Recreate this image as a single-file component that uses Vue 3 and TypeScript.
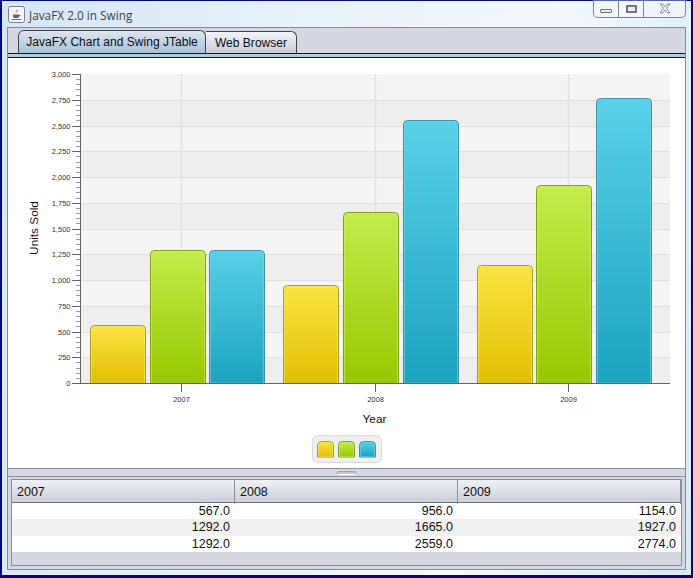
<script setup lang="ts">
const plotTop = 74
const plotBottom = 383
const plotH = plotBottom - plotTop
const yFor = (v: number) => plotBottom - (v / 3000) * plotH
const barTop = (v: number) => Math.ceil(yFor(v)) + 0.5
const bands = Array.from({ length: 12 }, (_, i) => i)
const majors = Array.from({ length: 13 }, (_, i) => i * 250)
const minors: number[] = []
for (let i = 0; i < 60; i++) if (i % 5) minors.push(i * 50)
const fmt = (v: number) => v.toLocaleString('en-US')
const series = [
  { id: 'y', values: [567, 956, 1154], xs: [90.5, 283.5, 477.5], w: 55, stroke: '#a59a2c', inner: '#fdeb70' },
  { id: 'g', values: [1292, 1665, 1927], xs: [150.5, 343.5, 536.5], w: 55, stroke: '#7f9f1c', inner: '#d5f36a' },
  { id: 'b', values: [1292, 2559, 2774], xs: [209.5, 403.5, 596.5], w: 55, stroke: '#3c8fa5', inner: '#7adcee' },
]
const cats = [{ x: 181.5, l: '2007' }, { x: 375.5, l: '2008' }, { x: 568.5, l: '2009' }]
const barPath = (x: number, y: number, w: number, h: number, r = 4) =>
  `M${x} ${y + h}V${y + r}Q${x} ${y} ${x + r} ${y}H${x + w - r}Q${x + w} ${y} ${x + w} ${y + r}V${y + h}Z`
const legend = [
  { id: 'y', x: 317.5, stroke: '#a59a2c', inner: '#fdeb70' },
  { id: 'g', x: 338.5, stroke: '#7f9f1c', inner: '#d5f36a' },
  { id: 'b', x: 359.5, stroke: '#3c8fa5', inner: '#7adcee' },
]
const columns = ['2007', '2008', '2009']
const rows = [
  ['567.0', '956.0', '1154.0'],
  ['1292.0', '1665.0', '1927.0'],
  ['1292.0', '2559.0', '2774.0'],
]
</script>

<template>
  <div class="window">
    <header class="titlebar">
      <svg class="app-icon" width="17" height="17" viewBox="0 0 17 17">
        <rect x="0.5" y="0.5" width="16" height="16" rx="2" fill="#f4f4f2" stroke="#7d8186" />
        <path d="M8.6 2.8c1.3 1.5-1.6 2.4-.6 4.2-.2-1.4 2.6-2 .6-4.2zM10 4.6C8.8 5.5 8.3 6 9 7.2c-.2-1 .2-1.6 1-2.6z" fill="#d8431c" />
        <path d="M5 8.6h6v1.8c0 1-1 1.6-3 1.6s-3-.6-3-1.6z" fill="#4a6f96" />
        <path d="M11 9h1.4v1.2H11M3.8 13h9.4v.9H3.8z" fill="#4a6f96" />
      </svg>
      <span class="title">JavaFX 2.0 in Swing</span>
      <div class="win-buttons">
        <span class="wbtn wmin"><i></i></span>
        <span class="wbtn wmax"><i></i></span>
        <span class="wbtn wclose">
          <svg width="14" height="11" viewBox="0 0 14 11"><path d="M2 1h2.600L7 3.600 9.400 1H12L8.600 5.200 12 10H9.400L7 7 4.600 10H2l3.400-4.800z" fill="#eef2f6" stroke="#77818a" stroke-width="0.9" /></svg>
        </span>
      </div>
    </header>

    <main class="frame">
      <div class="tabstrip">
        <div class="tab active">JavaFX Chart and Swing JTable</div>
        <div class="tab">Web Browser</div>
      </div>
      <div class="tabrule"></div>

      <section class="chart">
        <svg width="677" height="410" viewBox="8 58 677 410" class="chart-svg">
          <defs>
            <linearGradient id="grad-y" x1="0" y1="0" x2="0" y2="1"><stop offset="0" stop-color="#fbe444" /><stop offset="1" stop-color="#e2bf00" /></linearGradient>
            <linearGradient id="grad-g" x1="0" y1="0" x2="0" y2="1"><stop offset="0" stop-color="#c4ec4c" /><stop offset="1" stop-color="#98c800" /></linearGradient>
            <linearGradient id="grad-b" x1="0" y1="0" x2="0" y2="1"><stop offset="0" stop-color="#59d0e8" /><stop offset="1" stop-color="#1ba3c0" /></linearGradient>
          </defs>
          <rect x="81" :y="plotTop" width="589" :height="plotH" fill="#f5f5f5" />
          <rect v-for="i in bands.filter((b) => b % 2 === 0)" :key="'band' + i" x="81" :y="yFor((i + 1) * 250)" width="589" :height="plotH / 12" fill="#eeeeee" />
          <line v-for="v in majors.slice(1, 12)" :key="'h' + v" x1="81" x2="670" :y1="Math.round(yFor(v)) + 0.5" :y2="Math.round(yFor(v)) + 0.5" stroke="#dfdfdf" />
          <line v-for="c in cats" :key="'v' + c.x" :x1="c.x" :x2="c.x" :y1="plotTop" :y2="plotBottom" stroke="#e2e2e2" stroke-width="1.500" />

          <g v-for="s in series" :key="s.id">
            <g v-for="(v, i) in s.values" :key="i">
              <path :d="barPath(s.xs[i], barTop(v), s.w, plotBottom - barTop(v))" :fill="`url(#grad-${s.id})`" :stroke="s.stroke" />
              <path :d="barPath(s.xs[i] + 1, barTop(v) + 1, s.w - 2, plotBottom - barTop(v) - 1, 3)" fill="none" :stroke="s.inner" stroke-opacity="0.55" />
            </g>
          </g>

          <line x1="80.500" x2="80.500" :y1="plotTop" :y2="plotBottom + 1" stroke="#636363" />
          <line x1="80" x2="670" :y1="plotBottom + 0.5" :y2="plotBottom + 0.5" stroke="#636363" />
          <line v-for="v in minors" :key="'m' + v" x1="76" x2="80" :y1="Math.round(yFor(v)) + 0.5" :y2="Math.round(yFor(v)) + 0.5" stroke="#9c9c9c" />
          <line v-for="v in majors" :key="'t' + v" x1="72" x2="80" :y1="Math.round(yFor(v)) + 0.5" :y2="Math.round(yFor(v)) + 0.5" stroke="#636363" />
          <text v-for="v in majors" :key="'l' + v" x="70.500" :y="yFor(v) + 3" text-anchor="end" class="tick">{{ fmt(v) }}</text>
          <template v-for="c in cats" :key="c.l">
            <line :x1="c.x" :x2="c.x" y1="384" y2="392" stroke="#636363" />
            <text :x="c.x" y="402" text-anchor="middle" class="tick">{{ c.l }}</text>
          </template>
          <text x="374.500" y="423" text-anchor="middle" class="axis">Year</text>
          <text transform="translate(38 228) rotate(-90)" text-anchor="middle" class="axis">Units Sold</text>

          <rect x="312.500" y="435.500" width="69" height="27" rx="5" fill="#efefef" stroke="#d9d9d9" />
          <g v-for="l in legend" :key="l.id">
            <path :d="barPath(l.x, 441.500, 16, 15.500, 4)" :fill="`url(#grad-${l.id})`" :stroke="l.stroke" />
            <path :d="barPath(l.x + 1, 442.500, 14, 14, 3)" fill="none" :stroke="l.inner" stroke-opacity="0.55" />
          </g>
        </svg>
      </section>

      <div class="splitter"><span class="grip"></span></div>

      <section class="table-wrap">
        <div class="thead">
          <div v-for="c in columns" :key="c" class="th">{{ c }}</div>
        </div>
        <div v-for="(r, ri) in rows" :key="ri" class="tr" :class="{ odd: ri % 2 === 1 }">
          <div v-for="(v, ci) in r" :key="ci" class="td">{{ v }}</div>
        </div>
      </section>
    </main>
  </div>
</template>

<style>
html, body { margin: 0; padding: 0; background: #00007f; }
</style>

<style scoped>
.window {
  box-sizing: border-box;
  width: 693px;
  height: 578px;
  display: flex;
  flex-direction: column;
  border: solid #010b7c;
  border-width: 1px 2px 3px 2px;
  background: linear-gradient(100deg, #d4e6f6 0%, #e6f1fa 35%, #f4f9fd 70%, #d9e9f6 100%);
  padding: 0 5px 5px;
  font-family: "Liberation Sans", Arial, sans-serif;
}
.titlebar {
  flex: 0 0 26px;
  display: flex;
  align-items: flex-start;
  position: relative;
}
.app-icon { margin: 5px 0 0 1px; }
.title {
  margin: 6px 0 0 4px;
  font-family: "Open Sans", sans-serif;
  font-size: 11.800px;
  color: #3a4450;
  line-height: 16px;
}
.win-buttons {
  position: absolute;
  top: -1px;
  right: 0;
  width: 93px;
  height: 18px;
  box-sizing: border-box;
  display: flex;
  border: 1px solid #7c858e;
  border-top: 0;
  border-radius: 0 0 5px 5px;
  background: rgba(255, 255, 255, 0.35);
}
.wbtn {
  display: flex;
  align-items: center;
  justify-content: center;
  border-right: 1px solid #7c858e;
  height: 100%;
  box-sizing: border-box;
}
.wmin { width: 25px; }
.wmin i {
  display: block;
  width: 10px;
  height: 2px;
  margin-top: 5px;
  background: #e6e9ec;
  border: 1px solid #6c7680;
  border-radius: 1px;
}
.wmax { width: 25px; }
.wmax i {
  display: block;
  width: 7px;
  height: 4px;
  border: 2px solid #6c7680;
  border-radius: 1px;
  background: #eef1f4;
}
.wclose { flex: 1; border-right: 0; }
.frame {
  flex: 1;
  min-height: 0;
  display: flex;
  flex-direction: column;
  border: 1px solid #858c96;
  background: #d5d8e0;
}
.tabstrip {
  flex: 0 0 25px;
  box-sizing: border-box;
  display: flex;
  align-items: flex-end;
  padding-left: 10px;
}
.tab {
  box-sizing: border-box;
  height: 22px;
  width: 91px;
  border: 1px solid #40464f;
  border-bottom: 0;
  border-left: 0;
  border-radius: 0 6px 0 0;
  background: linear-gradient(#f3f4f6, #c8ccd6);
  color: #0c0c14;
  font-size: 12px;
  letter-spacing: 0.030px;
  line-height: 23px;
  text-align: center;
}
.tab.active {
  height: 23px;
  width: 188px;
  border-left: 1px solid #40464f;
  border-radius: 6px 6px 0 0;
  background: linear-gradient(#dde5ee, #a9c1d8);
}
.tabrule {
  flex: 0 0 5px;
  box-sizing: border-box;
  border-top: 1px solid #101826;
  border-bottom: 1px solid #101826;
  background: #b5cbe0;
}
.chart {
  flex: 0 0 410px;
  background: #fff;
  overflow: hidden;
}
.chart-svg { display: block; }
.tick {
  font-family: "Liberation Sans", Arial, sans-serif;
  font-size: 7.500px;
  fill: #333;
}
.axis {
  font-family: "Liberation Sans", Arial, sans-serif;
  font-size: 11.800px;
  fill: #111;
}
.splitter {
  flex: 0 0 9px;
  box-sizing: border-box;
  border-top: 1px solid #8d939d;
  border-bottom: 1px solid #8d939d;
  display: flex;
  justify-content: center;
  padding-right: 1px;
}
.grip {
  width: 19px;
  height: 4px;
  margin-top: 2px;
  box-sizing: border-box;
  border: 1px solid #a4a9b2;
  border-bottom-color: #fff;
  border-radius: 2px;
  background: #c6cad2;
}
.table-wrap {
  flex: 1;
  min-height: 0;
  margin: 2px 3px 3px;
  border: 1px solid #858c96;
}
.thead {
  display: grid;
  grid-template-columns: 223px 223px 1fr;
  height: 23px;
  box-sizing: border-box;
  border-bottom: 1px solid #6e7580;
  background: linear-gradient(#eef0f3 0%, #d6d9e0 70%, #cdd0d9 100%);
}
.th {
  box-sizing: border-box;
  padding-left: 5px;
  border-right: 1px solid #8a9099;
  font-size: 12.500px;
  line-height: 24px;
  color: #111;
}
.tr {
  display: grid;
  grid-template-columns: 223px 223px 1fr;
  height: 16.300px;
  background: #fff;
}
.tr.odd { background: #f1f1f1; }
.td {
  padding-right: 5px;
  text-align: right;
  font-size: 12.500px;
  line-height: 17px;
  color: #111;
}
</style>
